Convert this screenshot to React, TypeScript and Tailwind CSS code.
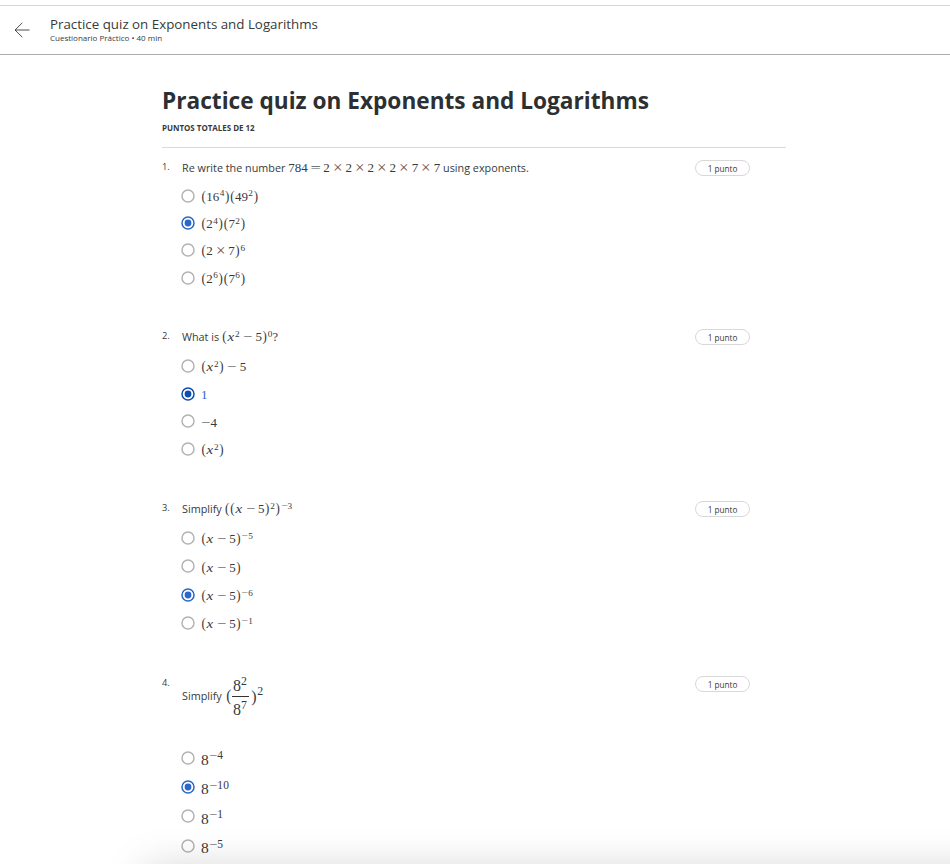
import React from "react";

function Glyph({ ch, small }: { ch: string; small?: boolean }) {
  if (ch === "x")
    return (
      <span className="inline-block w-[0.57em] text-center italic">
        <span className="inline-block scale-x-[1.15]">x</span>
      </span>
    );
  if (ch === "(" || ch === ")")
    return (
      <span className="inline-block w-[0.4em] text-center">
        <span className="inline-block scale-y-110">{ch}</span>
      </span>
    );
  if (ch === "×")
    return (
      <span className="inline-block w-[1.2em] text-center opacity-85">
        <span className="inline-block scale-[1.3]">×</span>
      </span>
    );
  if (ch === "=")
    return (
      <span className="inline-block w-[1.2em] text-center opacity-85">
        <span className="inline-block scale-x-[1.4]">=</span>
      </span>
    );
  if (ch === "−")
    return (
      <span className="inline-block w-[1.21em] text-center opacity-85">
        <span className="inline-block scale-x-[1.25]">−</span>
      </span>
    );
  if (ch === "~")
    return (
      <span className="inline-block w-[0.74em] text-center opacity-85">
        <span className="inline-block scale-x-[1.25]">−</span>
      </span>
    );
  return <span className={small ? "inline-block w-[0.53em]" : "inline-block w-[0.5em]"}>{ch}</span>;
}

// "^{...}" raises its content; "~" is a unary minus, "−" a spaced binary one.
function Formula({ src, tall }: { src: string; tall?: boolean }) {
  const parts = src.split(/(\^\{[^}]*\})/).filter(Boolean);
  return (
    <span className="inline-block whitespace-nowrap font-['Liberation_Serif',serif] leading-none">
      {parts.map((part, i) =>
        part.startsWith("^") ? (
          <span
            key={i}
            className={
              tall
                ? "relative -top-[0.48em] text-[0.74em]"
                : "relative -top-[0.47em] ml-[0.05em] text-[0.71em]"
            }
          >
            {[...part.slice(2, -1)].map((c, j) => (
              <Glyph key={j} ch={c} small />
            ))}
          </span>
        ) : (
          [...part].map((c, j) => <Glyph key={`${i}-${j}`} ch={c} />)
        ),
      )}
    </span>
  );
}

function Radio({ color }: { color?: string }) {
  return (
    <svg width="14" height="14" viewBox="0 0 14 14" className="shrink-0">
      <circle cx="7" cy="7" r="6" fill="white" stroke={color ?? "#b3b3b3"} strokeWidth="1.5" />
      {color && <circle cx="7" cy="7" r="3.4" fill={color} />}
    </svg>
  );
}

type QuizItem = {
  prompt: React.ReactNode;
  options: string[];
  selected: number;
  color?: string;
  textColor?: string;
  section: string;
  promptBox: string;
  row: string;
  label: string;
};

const items: QuizItem[] = [
  {
    prompt: (
      <>
        Re write the number <Math13 src="784=2×2×2×2×7×7" /> using exponents.
      </>
    ),
    options: ["(16^{4})(49^{2})", "(2^{4})(7^{2})", "(2×7)^{6}", "(2^{6})(7^{6})"],
    selected: 1,
    section: "h-[169px]",
    promptBox: "h-[24px]",
    row: "h-[27.4px]",
    label: "text-[13px] pt-px",
  },
  {
    prompt: (
      <>
        What is <Math13 src="(x^{2}−5)^{0}" />
        <span className="font-['Liberation_Serif',serif] text-[12.5px]">?</span>
      </>
    ),
    options: ["(x^{2})−5", "1", "~4", "(x^{2})"],
    selected: 1,
    color: "#0f4cb0",
    textColor: "text-[#2a67c8]",
    section: "h-[172px]",
    promptBox: "h-[25px]",
    row: "h-[27.7px]",
    label: "text-[13px] pt-[2px]",
  },
  {
    prompt: (
      <>
        Simplify <Math13 src="((x−5)^{2})^{~3}" />
      </>
    ),
    options: ["(x−5)^{~5}", "(x−5)", "(x−5)^{~6}", "(x−5)^{~1}"],
    selected: 2,
    section: "h-[175px]",
    promptBox: "h-[25px]",
    row: "h-[28.3px]",
    label: "text-[13px] pt-[1.5px]",
  },
  {
    prompt: <FractionPrompt />,
    options: ["8^{~4}", "8^{~10}", "8^{~1}", "8^{~5}"],
    selected: 1,
    section: "h-[190px]",
    promptBox: "h-[69px]",
    row: "h-[29.4px]",
    label: "text-[15.5px] pt-[4px]",
  },
];

function Math13({ src }: { src: string }) {
  return (
    <span className="text-[13px]">
      <Formula src={src} />
    </span>
  );
}

function FractionPrompt() {
  return (
    <span className="flex h-[45px] items-center pt-px font-['Liberation_Serif',serif]">
      <span className="mr-[4px] font-['Open_Sans',sans-serif]">Simplify</span>
      <span className="text-[15px] leading-none">
        <Glyph ch="(" />
      </span>
      <span className="flex w-[17px] flex-col items-center pt-[2px] text-[16px] leading-none">
        <span className="flex h-[22px] w-full items-center justify-center border-b border-[#333] pt-[1px]">
          <Formula src="8^{2}" tall />
        </span>
        <span className="flex h-[22px] items-center pt-[4px]">
          <Formula src="8^{7}" tall />
        </span>
      </span>
      <span className="ml-[2px] text-[16px] leading-none">
        <Formula src=")^{2}" tall />
      </span>
    </span>
  );
}

function Question({ item, index }: { item: QuizItem; index: number }) {
  return (
    <section className={`flex items-start ${item.section}`}>
      <span className="w-[20px] shrink-0 pt-[2px] text-[9.3px] leading-[14px]">{index + 1}.</span>
      <div className="w-[513px] shrink-0">
        <div className={`-mt-px mb-px whitespace-nowrap text-[10.8px] leading-[20px] ${item.promptBox}`}>
          {item.prompt}
        </div>
        {item.options.map((option, i) => {
          const on = i === item.selected;
          return (
            <label key={option} className={`-ml-px flex items-center ${item.row}`}>
              <Radio color={on ? (item.color ?? "#2a67c8") : undefined} />
              <span className={`ml-[6px] leading-none ${item.label} ${on ? (item.textColor ?? "") : ""}`}>
                <Formula src={option} tall={index === 3} />
              </span>
            </label>
          );
        })}
      </div>
      <span className="mt-[2px] flex h-[16px] w-[55px] items-center justify-center rounded-full border border-[#d8d8d8] pt-[2px] text-[8.2px] leading-none">
        1 punto
      </span>
    </section>
  );
}

export default function App() {
  return (
    <div className="relative h-[864px] w-[950px] overflow-hidden bg-white font-['Open_Sans',sans-serif] text-[#373a3c]">
      <div className="h-[6px] border-b border-[#d6d6d6]" />
      <header className="flex h-[49px] items-center border-b border-[#adadad]">
        <svg width="16" height="16" viewBox="0 0 16 16" className="ml-[14px] shrink-0" fill="none" stroke="#4a4d50" strokeWidth="1">
          <path d="M15.5 8H1M8.3 0.8L1 8l7.3 7.2" />
        </svg>
        <div className="ml-[20px] pb-[2px]">
          <div className="text-[13.33px] leading-[17px]">Practice quiz on Exponents and Logarithms</div>
          <div className="text-[8px] leading-[10px]">Cuestionario Práctico • 40 min</div>
        </div>
      </header>
      <main className="ml-[162px] w-[624px] pt-[30px]">
        <h1 className="whitespace-nowrap text-[22.65px] font-bold leading-[31px] text-[#2d3032]">
          Practice quiz on Exponents and Logarithms
        </h1>
        <div className="mt-[6px] text-[7.95px] font-bold leading-[12px]">PUNTOS TOTALES DE 12</div>
        <div className="mt-[13px] mb-[10px] h-px bg-[#d9dada]" />
        {items.map((item, i) => (
          <Question key={i} item={item} index={i} />
        ))}
      </main>
      <div className="absolute left-[145px] top-[867px] h-[60px] w-[900px] shadow-[0_0_40px_rgba(0,0,0,0.17)]" />
    </div>
  );
}
